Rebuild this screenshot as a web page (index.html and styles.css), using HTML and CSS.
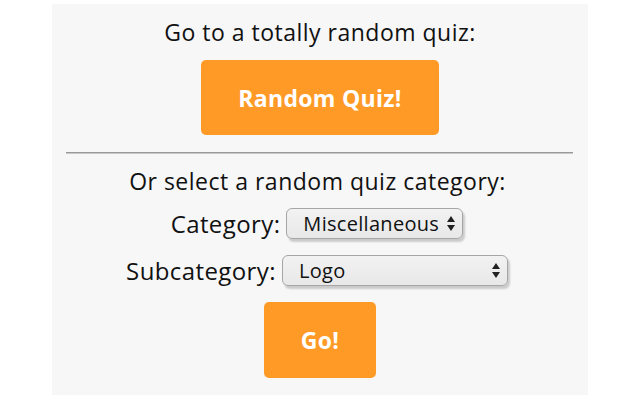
FILE: index.html
```html
<!DOCTYPE html>
<html lang="en">
<head>
    <meta charset="UTF-8">
    <meta name="viewport" content="width=device-width, initial-scale=1.0">
    <title>Random Quiz</title>
    <link rel="stylesheet" href="styles.css">
</head>
<body>

    <div class="panel">
        <p class="intro">Go to a totally random quiz:</p>
        <button class="btn btn-random">Random Quiz!</button>

        <hr class="divider">

        <p class="intro intro-second">Or select a random quiz category:</p>

        <!-- Category picker -->
        <div class="field-row">
            <label for="category">Category:</label>
            <span class="select-wrap select-category">
                <select id="category">
                    <option>Miscellaneous</option>
                </select>
                <svg class="select-arrows" width="8" height="15" viewBox="0 0 8 15">
                    <path d="M4 0 L8 6 L0 6 Z M0 9 L8 9 L4 15 Z" fill="#222"/>
                </svg>
            </span>
        </div>

        <div class="field-row field-row-sub">
            <label for="subcategory">Subcategory:</label>
            <span class="select-wrap select-sub">
                <select id="subcategory">
                    <option>Logo</option>
                </select>
                <svg class="select-arrows" width="8" height="15" viewBox="0 0 8 15">
                    <path d="M4 0 L8 6 L0 6 Z M0 9 L8 9 L4 15 Z" fill="#222"/>
                </svg>
            </span>
        </div>

        <button class="btn btn-go">Go!</button>
    </div>

</body>
</html>
```

FILE: styles.css
```css
/* General */
body {
    margin: 0;
    background-color: #ffffff;
    font-family: "Open Sans", "Liberation Sans", sans-serif;
    color: #111;
}

/* Gray panel */
.panel {
    width: 536px;
    height: 391px;
    margin: 4px auto 0;
    padding-top: 14px;
    box-sizing: border-box;
    background-color: #f7f7f7;
    display: flex;
    flex-direction: column;
    align-items: center;
}

.intro {
    margin: 0;
    font-size: 23px;
    line-height: 28px;
    letter-spacing: 0.5px;
}

.intro-second {
    margin-top: 13px;
    padding-right: 5px;
}

/* Orange buttons */
.btn {
    border: none;
    border-radius: 5px;
    background-color: #ff9a27;
    color: #fff;
    font-family: "Open Sans", "Liberation Sans", sans-serif;
    font-weight: bold;
    font-size: 23px;
    letter-spacing: 0.3px;
    cursor: pointer;
}

.btn-random {
    width: 238px;
    height: 75px;
    margin-top: 14px;
}

.btn-go {
    width: 112px;
    height: 76px;
    margin-top: 16px;
}

.divider {
    align-self: stretch;
    margin: 17px 15px 0 14px;
    height: 0;
    border: none;
    border-top: 1px solid #999;
    border-bottom: 1px solid #c8c8c8;
}

/* Select rows */
.field-row {
    display: flex;
    align-items: center;
    gap: 6px;
    margin-top: 13px;
    padding-right: 6px;
    font-size: 24px;
    line-height: 31px;
    letter-spacing: 0.4px;
}

.field-row-sub {
    margin-top: 16px;
}

.select-wrap {
    position: relative;
    display: inline-block;
    height: 31px;
}

.select-wrap select {
    display: block;
    appearance: none;
    -webkit-appearance: none;
    height: 31px;
    padding: 0 0 0 16px;
    border: 1px solid #a6a6a6;
    border-radius: 6px;
    background: linear-gradient(#f2f2f2, #e8e8e8);
    box-shadow: 2px 3px 2px rgba(0, 0, 0, 0.18);
    font-family: "Open Sans", "Liberation Sans", sans-serif;
    font-size: 20px;
    letter-spacing: 0.3px;
    color: #111;
    outline: none;
}

.select-category select {
    width: 177px;
}

.select-sub select {
    width: 226px;
}

.select-arrows {
    position: absolute;
    right: 8px;
    top: 8px;
    pointer-events: none;
}
```
